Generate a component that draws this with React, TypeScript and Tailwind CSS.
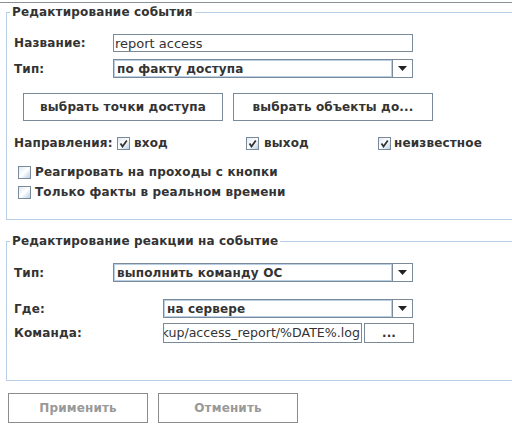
import React from "react";

const Check = ({ checked }: { checked?: boolean }) => (
  <span className="relative inline-block w-[13px] h-[13px] shrink-0 border border-[#7a8a99] bg-gradient-to-br from-[#dde8f3] via-white to-[#b8cfe5]">
    {checked && (
      <svg className="absolute left-[1px] top-[1px]" width="9" height="9" viewBox="0 0 9 9">
        <path d="M1.5 4.5 L3.5 7.5 L7.8 1.5" stroke="#333" strokeWidth="1.8" fill="none" />
      </svg>
    )}
  </span>
);

const Select = ({ value, w }: { value: string; w: string }) => (
  <div className={`flex h-[19px] border border-[#7a8a99] bg-white ${w}`}>
    <div className="flex-1 flex items-center border border-[#b8cfe5] pl-[2px] text-[12px] font-bold leading-none tracking-[0.15px]">
      {value}
    </div>
    <div className="w-[20px] border-l border-[#7a8a99] flex items-center justify-center">
      <svg width="9" height="5" viewBox="0 0 9 5">
        <path d="M0 0 H9 L4.5 5 Z" fill="#222" />
      </svg>
    </div>
  </div>
);

export default function App() {
  return (
    <div className="w-[512px] h-[446px] bg-white overflow-hidden text-[#333] font-['DejaVu_Sans',sans-serif]">
      <div className="pt-[2px]">
        <div className="h-px bg-[#8a9199]" />
      </div>
      <fieldset className="ml-[6px] mt-px w-[520px] border-l border-t border-b border-[#b8cfe5]">
        <legend className="ml-[3px] px-[2px] text-[12px] font-bold leading-[16px] tracking-[0.15px]">Редактирование события</legend>
        <div className="pb-[19px] tracking-[0.15px]">
          <div className="mt-[14px] flex items-center h-[18px]">
            <div className="w-[106px] pl-[7px] text-[12px] font-bold">Название:</div>
            <div className="w-[300px] h-[18px] border border-[#7a8a99] flex items-center pl-px text-[13px] leading-none tracking-normal">report access</div>
          </div>
          <div className="mt-[7px] flex items-center h-[19px]">
            <div className="w-[106px] pl-[7px] text-[12px] font-bold">Тип:</div>
            <Select value="по факту доступа" w="w-[300px]" />
          </div>
          <div className="mt-[15px] pl-[16px] flex gap-[10px]">
            <button className="w-[200px] h-[28px] border border-[#7a8a99] bg-white text-[12px] font-bold text-[#333]">выбрать точки доступа</button>
            <button className="w-[200px] h-[28px] border border-[#7a8a99] bg-white text-[12px] font-bold text-[#333]">выбрать объекты до...</button>
          </div>
          <div className="mt-[14px] flex items-center h-[16px] text-[12px] font-bold">
            <div className="w-[110px] pl-[7px]">Направления:</div>
            <div className="w-[129px] flex items-center gap-[4px]"><Check checked /><span>вход</span></div>
            <div className="w-[132px] flex items-center gap-[5px]"><Check checked /><span>выход</span></div>
            <div className="flex items-center gap-[3px]"><Check checked /><span>неизвестное</span></div>
          </div>
          <div className="mt-[13px] flex items-center h-[16px] pl-[11px] gap-[4px] text-[12px] font-bold">
            <Check /><span>Реагировать на проходы с кнопки</span>
          </div>
          <div className="mt-[4px] flex items-center h-[16px] pl-[11px] gap-[4px] text-[12px] font-bold">
            <Check /><span>Только факты в реальном времени</span>
          </div>
        </div>
      </fieldset>
      <fieldset className="ml-[6px] mt-[13px] w-[520px] border-l border-t border-b border-[#b8cfe5]">
        <legend className="ml-[3px] px-[2px] text-[12px] font-bold leading-[16px] tracking-[0.15px]">Редактирование реакции на событие</legend>
        <div className="pb-[37px] tracking-[0.15px]">
          <div className="mt-[14px] flex items-center h-[19px]">
            <div className="w-[106px] pl-[7px] text-[12px] font-bold">Тип:</div>
            <Select value="выполнить команду ОС" w="w-[300px]" />
          </div>
          <div className="mt-[17px] flex items-center h-[19px]">
            <div className="w-[156px] pl-[7px] text-[12px] font-bold">Где:</div>
            <Select value="на сервере" w="w-[250px]" />
          </div>
          <div className="mt-[5px] flex items-center h-[20px]">
            <div className="w-[156px] pl-[7px] text-[12px] font-bold">Команда:</div>
            <div className="w-[199px] h-[20px] border border-[#7a8a99] flex items-center justify-end pr-px text-[12.6px] leading-none overflow-hidden whitespace-nowrap tracking-normal">
              <span className="shrink-0">backup/access_report/%DATE%.log</span>
            </div>
            <button className="ml-[2px] w-[50px] h-[20px] border border-[#7a8a99] bg-white text-[12px] font-bold text-[#333] leading-none">...</button>
          </div>
        </div>
      </fieldset>
      <div className="mt-[12px] ml-[8px] flex gap-[10px] tracking-[0.15px]">
        <button className="w-[140px] h-[30px] border border-[#8c8c8c] bg-white text-[12px] font-bold text-[#999]">Применить</button>
        <button className="w-[140px] h-[30px] border border-[#8c8c8c] bg-white text-[12px] font-bold text-[#999]">Отменить</button>
      </div>
    </div>
  );
}
